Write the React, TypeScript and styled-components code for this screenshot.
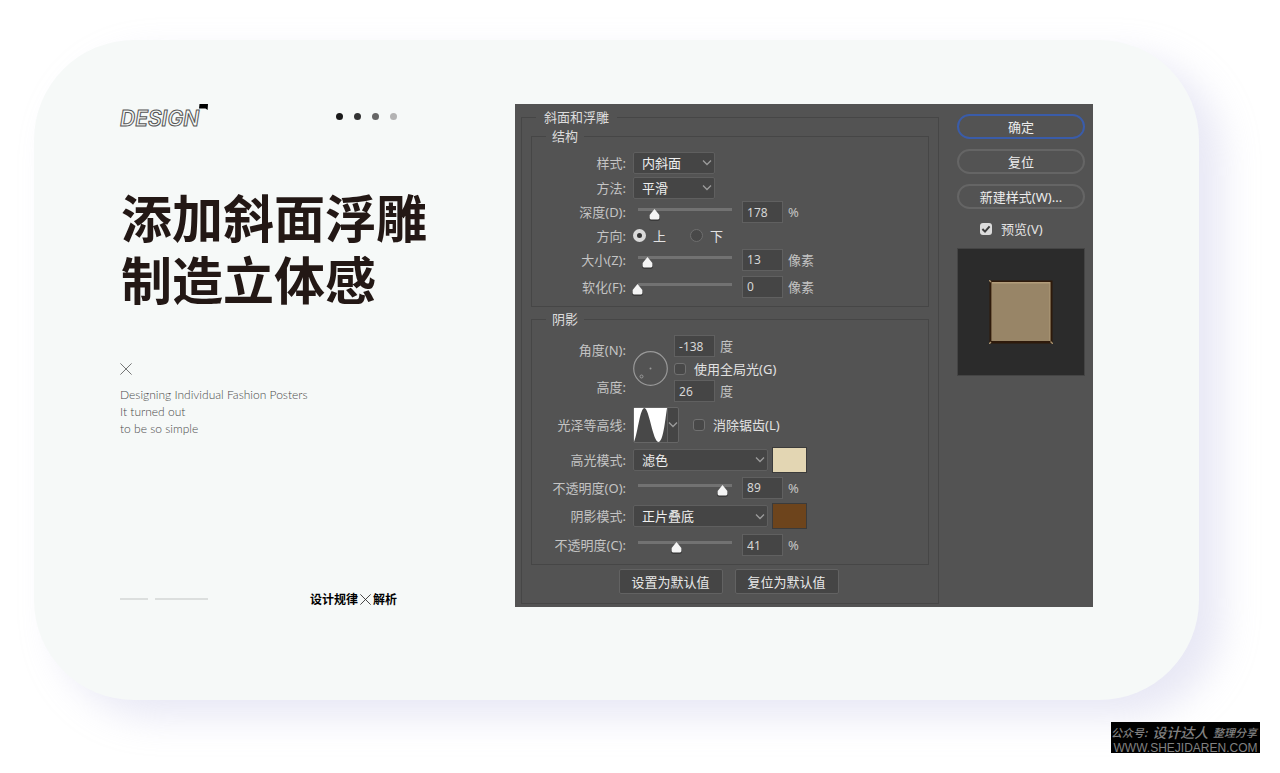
import React, { useId, useState } from 'react';
import styled, { createGlobalStyle, css } from 'styled-components';

const svgUrl = (body: string, w: number, h: number) =>
  `url("data:image/svg+xml,${encodeURIComponent(
    `<svg xmlns='http://www.w3.org/2000/svg' width='${w}' height='${h}' viewBox='0 0 ${w} ${h}'>${body}</svg>`,
  )}")`;

const chevron = svgUrl("<path d='M1 1.5 L5 5.5 L9 1.5' fill='none' stroke='#9c9c9c' stroke-width='1.3'/>", 10, 7);
const thumb = svgUrl(
  "<path d='M5.5 1.2 L10.8 6.6 V10 Q10.8 11.8 9 11.8 H2 Q0.2 11.8 0.2 10 V6.6 Z' fill='#333333'/><path d='M5.5 0 L10.4 6 V9 Q10.4 10.4 9 10.4 H2 Q0.6 10.4 0.6 9 V6 Z' fill='#f4f4f4'/>",
  11,
  12,
);
const tick = svgUrl("<path d='M2.4 6 L5 8.6 L9.6 3.4' fill='none' stroke='#3c3c3c' stroke-width='2'/>", 12, 12);

const GlobalStyle = createGlobalStyle`
  *, *::before, *::after { box-sizing: border-box; }
  body {
    margin: 0;
    background: #ffffff;
    font-family: "Noto Sans", "Noto Sans CJK SC", sans-serif;
    font-size: 13px;
  }
  button, input, select { font: inherit; margin: 0; }
  h1, p { margin: 0; }
`;

const Page = styled.div`
  display: flex;
  flex-direction: column;
  padding: 40px 20px 20px 34px;
  overflow: hidden;
`;

const Card = styled.main`
  display: flex;
  gap: 88px;
  margin-right: 61px;
  padding: 64px 106px 93px 86px;
  border-radius: 100px;
  background: #f6f9f8;
  box-shadow: 23px 17px 36px rgba(190, 190, 226, 0.36);
`;

/* Poster column */

const Intro = styled.section`
  display: flex;
  flex: 1 0 307px;
  flex-direction: column;
`;

const IntroHeader = styled.header`
  display: flex;
  justify-content: space-between;
  max-width: 277px;
  height: 24px;
`;

const Brand = styled.div`
  display: flex;
  align-items: flex-start;
`;

const BrandName = styled.span`
  padding-top: 3px;
  color: #f6f9f8;
  font: italic 600 21px/24px Inter, sans-serif;
  -webkit-text-stroke: 1px #555555;
`;

const Dots = styled.div`
  display: flex;
  align-items: center;
  gap: 11px;
`;

const Dot = styled.span<{ $color: string }>`
  width: 7px;
  height: 7px;
  border-radius: 50%;
  background: ${(p) => p.$color};
`;

const Title = styled.h1`
  margin-top: 62px;
  padding-left: 1px;
  color: #231815;
  font: 700 51px/62px "Liberation Sans", "Noto Sans CJK SC", sans-serif;
  white-space: nowrap;
`;

const CrossIcon = styled.svg`
  display: block;
  flex: none;
`;

const Quote = styled.div`
  display: grid;
  gap: 11px;
  margin-top: 49px;
`;

const Tagline = styled.p`
  color: #4a4a4a;
  font: 300 12px/17px Lato, "Liberation Sans", sans-serif;
`;

const IntroFooter = styled.footer`
  display: flex;
  align-items: center;
  justify-content: space-between;
  max-width: 277px;
  height: 16px;
  margin-top: auto;
`;

const Dashes = styled.div`
  display: flex;
  gap: 7px;
`;

const Dash = styled.span<{ $w: number }>`
  width: ${(p) => p.$w}px;
  height: 2px;
  background: #dcdfde;
`;

const Series = styled.div`
  display: flex;
  align-items: center;
  gap: 2px;
  color: #000000;
  font: 700 12px/16px "Noto Sans CJK SC", sans-serif;
`;

/* Layer-style dialog */

const Dialog = styled.section`
  display: flex;
  flex: 0 1 578px;
  gap: 18px;
  padding: 4px 8px 3px 6px;
  background: #535353;
  color: #c4c4c4;
  line-height: 18px;
`;

const Group = styled.fieldset<{ $outer?: boolean }>`
  min-width: 0;
  margin: 0;
  border: 1px solid #464646;
  ${(p) =>
    p.$outer
      ? css`
          flex: 1;
          padding: 1px 9px 9px;
        `
      : css`
          padding: 5px 0;
          & + & {
            margin-top: 3px;
          }
        `}
`;

const Legend = styled.legend<{ $outer?: boolean }>`
  margin-left: ${(p) => (p.$outer ? 5 : 14)}px;
  padding: 0 ${(p) => (p.$outer ? 8 : 6)}px;
  color: #dddddd;
  line-height: 18px;
`;

const Row = styled.div<{ $h: number }>`
  display: grid;
  grid-template-columns: 94px 1fr;
  column-gap: 7px;
  align-items: center;
  height: ${(p) => p.$h}px;
`;

const RowLabel = styled.label`
  text-align: right;
  white-space: nowrap;
`;

const LabelStack = styled.div`
  display: grid;
  gap: 19px;
`;

const Controls = styled.div<{ $gap?: number }>`
  display: flex;
  align-items: center;
  gap: ${(p) => p.$gap ?? 4}px;
`;

const Select = styled.select<{ $w: number }>`
  appearance: none;
  width: ${(p) => p.$w}px;
  height: 22px;
  padding: 0 20px 0 8px;
  border: 1px solid #5f5f5f;
  border-radius: 2px;
  background: #454545 ${chevron} no-repeat right 2px center;
  color: #efefef;
  line-height: 20px;
`;

const Slider = styled.input`
  appearance: none;
  width: 106px;
  height: 18px;
  margin-left: -1px;
  background: linear-gradient(#727272, #727272) no-repeat 6px 5px / 94px 3px;
  &::-webkit-slider-runnable-track {
    height: 18px;
  }
  &::-webkit-slider-thumb {
    appearance: none;
    width: 11px;
    height: 12px;
    margin-top: 6px;
    background: ${thumb};
  }
`;

const NumberBox = styled.input`
  width: 41px;
  height: 22px;
  padding: 0 4px;
  border: 1px solid #606060;
  background: #454545;
  color: #d6d6d6;
  font-size: 12px;
`;

const Unit = styled.span`
  padding-left: 1px;
`;

const Choice = styled.label<{ $gap: number }>`
  display: flex;
  align-items: center;
  gap: ${(p) => p.$gap}px;
  color: #e2e2e2;
  white-space: nowrap;
`;

const Radio = styled.input`
  appearance: none;
  width: 13px;
  height: 13px;
  border: 1px solid #6e6e6e;
  border-radius: 50%;
  background: #484848;
  &:checked {
    border: 4px solid #dadada;
    background: #333333;
  }
`;

const Checkbox = styled.input`
  appearance: none;
  width: 12px;
  height: 12px;
  border: 1px solid #707070;
  border-radius: 3px;
  background: #484848;
  &:checked {
    border: 0;
    background: #dcdcdc ${tick} center no-repeat;
  }
`;

const AngleStack = styled.div`
  display: grid;
  grid-template-rows: 22px 23px 22px;
  align-items: center;
`;

const ContourButton = styled.button`
  display: flex;
  align-items: center;
  width: 46px;
  height: 36px;
  margin-right: 10px;
  padding: 0;
  border: 1px solid #666666;
  border-radius: 2px;
  background: #454545 ${chevron} no-repeat right 0 center;
`;

const Swatch = styled.button<{ $color: string }>`
  width: 35px;
  height: 26px;
  padding: 0;
  border: 1px solid #3b3b3b;
  background: ${(p) => p.$color};
`;

const DefaultActions = styled.div`
  display: flex;
  justify-content: center;
  gap: 12px;
  margin-top: 4px;
  padding-right: 3px;
`;

const DefaultButton = styled.button`
  width: 104px;
  height: 25px;
  padding: 0;
  border: 1px solid #626262;
  border-radius: 2px;
  background: #454545;
  color: #e8e8e8;
  line-height: 20px;
`;

const Side = styled.aside`
  display: flex;
  flex: 0 0 128px;
  flex-direction: column;
  gap: 10px;
  padding-top: 6px;
`;

const PillButton = styled.button<{ $primary?: boolean }>`
  height: 25px;
  padding: 0;
  border: 2px solid ${(p) => (p.$primary ? '#3a5ca9' : '#656565')};
  border-radius: 13px;
  background: transparent;
  color: #ececec;
  line-height: 18px;
`;

const PreviewToggle = styled(Choice)`
  height: 19px;
  padding-left: 23px;
`;

const Preview = styled.div`
  display: grid;
  place-items: center;
  height: 128px;
  border: 1px solid #444444;
  background: #2b2b2b;
`;

/* Credit badge */

const Credit = styled.footer`
  align-self: flex-end;
  width: 149px;
  height: 31px;
  margin-top: 22px;
  background: #000000;
  color: #808080;
  white-space: nowrap;
`;

const CreditLine = styled.div`
  display: flex;
  align-items: center;
  justify-content: space-between;
  height: 20px;
  padding-right: 3px;
  font: italic 500 11px/20px "Noto Sans CJK SC", sans-serif;
`;

const CreditName = styled.strong`
  font-size: 14px;
  font-weight: 500;
`;

const CreditSite = styled.div`
  text-align: center;
  font: 400 12px/12px "Liberation Sans", sans-serif;
`;

function SliderRow(props: { h: number; label: string; unit: string; value: number; min?: number; max: number }) {
  const id = useId();
  const [value, setValue] = useState(props.value);
  return (
    <Row $h={props.h}>
      <RowLabel htmlFor={id}>{props.label}</RowLabel>
      <Controls>
        <Slider
          type="range"
          aria-label={props.label}
          min={props.min ?? 0}
          max={props.max}
          value={value}
          onChange={(e) => setValue(Number(e.target.value))}
        />
        <NumberBox id={id} value={value} onChange={(e) => setValue(Number(e.target.value) || 0)} />
        <Unit>{props.unit}</Unit>
      </Controls>
    </Row>
  );
}

function SelectRow(props: { h: number; label: string; value: string; width: number; swatch?: string }) {
  const id = useId();
  return (
    <Row $h={props.h}>
      <RowLabel htmlFor={id}>{props.label}</RowLabel>
      <Controls>
        <Select id={id} $w={props.width}>
          <option>{props.value}</option>
        </Select>
        {props.swatch && <Swatch $color={props.swatch} aria-label={props.label} />}
      </Controls>
    </Row>
  );
}

function Cross({ size, color }: { size: number; color: string }) {
  return (
    <CrossIcon width={size} height={size} viewBox="0 0 12 12" aria-hidden="true">
      <path d="M0.4 0.4 L11.6 11.6 M11.6 0.4 L0.4 11.6" stroke={color} strokeWidth="0.9" />
    </CrossIcon>
  );
}

function StructureGroup() {
  return (
    <Group>
      <Legend>结构</Legend>
      <SelectRow h={25} label="样式:" value="内斜面" width={82} />
      <SelectRow h={25} label="方法:" value="平滑" width={82} />
      <SliderRow h={24} label="深度(D):" value={178} min={1} max={1000} unit="%" />
      <Row $h={23}>
        <RowLabel as="span">方向:</RowLabel>
        <Controls $gap={24}>
          <Choice $gap={7}>
            <Radio type="radio" name="direction" defaultChecked />上
          </Choice>
          <Choice $gap={7}>
            <Radio type="radio" name="direction" />下
          </Choice>
        </Controls>
      </Row>
      <SliderRow h={25} label="大小(Z):" value={13} max={122} unit="像素" />
      <SliderRow h={29} label="软化(F):" value={0} max={16} unit="像素" />
    </Group>
  );
}

function ShadingGroup() {
  return (
    <Group>
      <Legend>阴影</Legend>
      <Row $h={71}>
        <LabelStack>
          <RowLabel htmlFor="angle">角度(N):</RowLabel>
          <RowLabel htmlFor="altitude">高度:</RowLabel>
        </LabelStack>
        <Controls $gap={6}>
          <svg width="35" height="35" viewBox="0 0 35 35" aria-hidden="true">
            <circle cx="17.5" cy="17.5" r="16.8" fill="none" stroke="#999999" strokeWidth="1.2" />
            <circle cx="17.5" cy="17.5" r="1" fill="#999999" />
            <circle cx="8.5" cy="25.5" r="1.5" fill="none" stroke="#999999" />
          </svg>
          <AngleStack>
            <Controls>
              <NumberBox id="angle" defaultValue="-138" />
              <Unit>度</Unit>
            </Controls>
            <Choice $gap={8}>
              <Checkbox type="checkbox" />
              使用全局光(G)
            </Choice>
            <Controls>
              <NumberBox id="altitude" defaultValue="26" />
              <Unit>度</Unit>
            </Controls>
          </AngleStack>
        </Controls>
      </Row>
      <Row $h={41}>
        <RowLabel htmlFor="contour">光泽等高线:</RowLabel>
        <Controls>
          <ContourButton id="contour">
            <svg width="34" height="34" viewBox="0 0 34 34" aria-hidden="true">
              <rect width="33" height="34" fill="#ffffff" />
              <path
                d="M0 34 C4 24 6 0 10.5 0 C15 0 19 34 24.5 34 C29 34 31 14 33 0 V34 Z"
                fill="#484848"
              />
              <path d="M33.5 0 V34" stroke="#606060" />
            </svg>
          </ContourButton>
          <Choice $gap={8}>
            <Checkbox type="checkbox" />
            消除锯齿(L)
          </Choice>
        </Controls>
      </Row>
      <SelectRow h={29} label="高光模式:" value="滤色" width={135} swatch="#e3d6b3" />
      <SliderRow h={27} label="不透明度(O):" value={89} max={100} unit="%" />
      <SelectRow h={30} label="阴影模式:" value="正片叠底" width={135} swatch="#6d441c" />
      <SliderRow h={28} label="不透明度(C):" value={41} max={100} unit="%" />
    </Group>
  );
}

export default function App() {
  return (
    <Page>
      <GlobalStyle />
      <Card>
        <Intro>
          <IntroHeader>
            <Brand>
              <BrandName>DESIGN</BrandName>
              <svg width="9" height="6" viewBox="0 0 9 6" aria-hidden="true">
                <path d="M0.5 0 H9 L8.6 6 L6.5 4.6 H0 Z" fill="#000000" />
              </svg>
            </Brand>
            <Dots>
              {['#1a1a1a', '#333333', '#666666', '#b3b3b3'].map((color) => (
                <Dot key={color} $color={color} />
              ))}
            </Dots>
          </IntroHeader>
          <Title>
            添加斜面浮雕
            <br />
            制造立体感
          </Title>
          <Quote>
            <Cross size={12} color="#666666" />
            <Tagline>
              Designing Individual Fashion Posters
              <br />
              It turned out
              <br />
              to be so simple
            </Tagline>
          </Quote>
          <IntroFooter>
            <Dashes>
              <Dash $w={28} />
              <Dash $w={53} />
            </Dashes>
            <Series>
              <span>设计规律</span>
              <Cross size={11} color="#222222" />
              <span>解析</span>
            </Series>
          </IntroFooter>
        </Intro>

        <Dialog>
          <Group $outer>
            <Legend $outer>斜面和浮雕</Legend>
            <StructureGroup />
            <ShadingGroup />
            <DefaultActions>
              <DefaultButton>设置为默认值</DefaultButton>
              <DefaultButton>复位为默认值</DefaultButton>
            </DefaultActions>
          </Group>
          <Side>
            <PillButton $primary>确定</PillButton>
            <PillButton>复位</PillButton>
            <PillButton>新建样式(W)...</PillButton>
            <PreviewToggle $gap={9}>
              <Checkbox type="checkbox" defaultChecked />
              预览(V)
            </PreviewToggle>
            <Preview>
              <svg width="64" height="64" viewBox="0 0 64 64" aria-hidden="true">
                <rect x="0.5" y="0.5" width="63" height="63" fill="#2e1a0b" />
                <rect x="2.5" y="2" width="59" height="59" fill="#b39d7b" />
                <rect x="3" y="3.5" width="57.5" height="57.5" fill="#988567" />
                <path d="M0 0 L2 2 M0 64 L2 62 M64 64 L61.5 61.5" stroke="#a8916e" strokeWidth="1.4" />
              </svg>
            </Preview>
          </Side>
        </Dialog>
      </Card>

      <Credit>
        <CreditLine>
          <span>公众号:</span>
          <CreditName>设计达人</CreditName>
          <span>整理分享</span>
        </CreditLine>
        <CreditSite>WWW.SHEJIDAREN.COM</CreditSite>
      </Credit>
    </Page>
  );
}
